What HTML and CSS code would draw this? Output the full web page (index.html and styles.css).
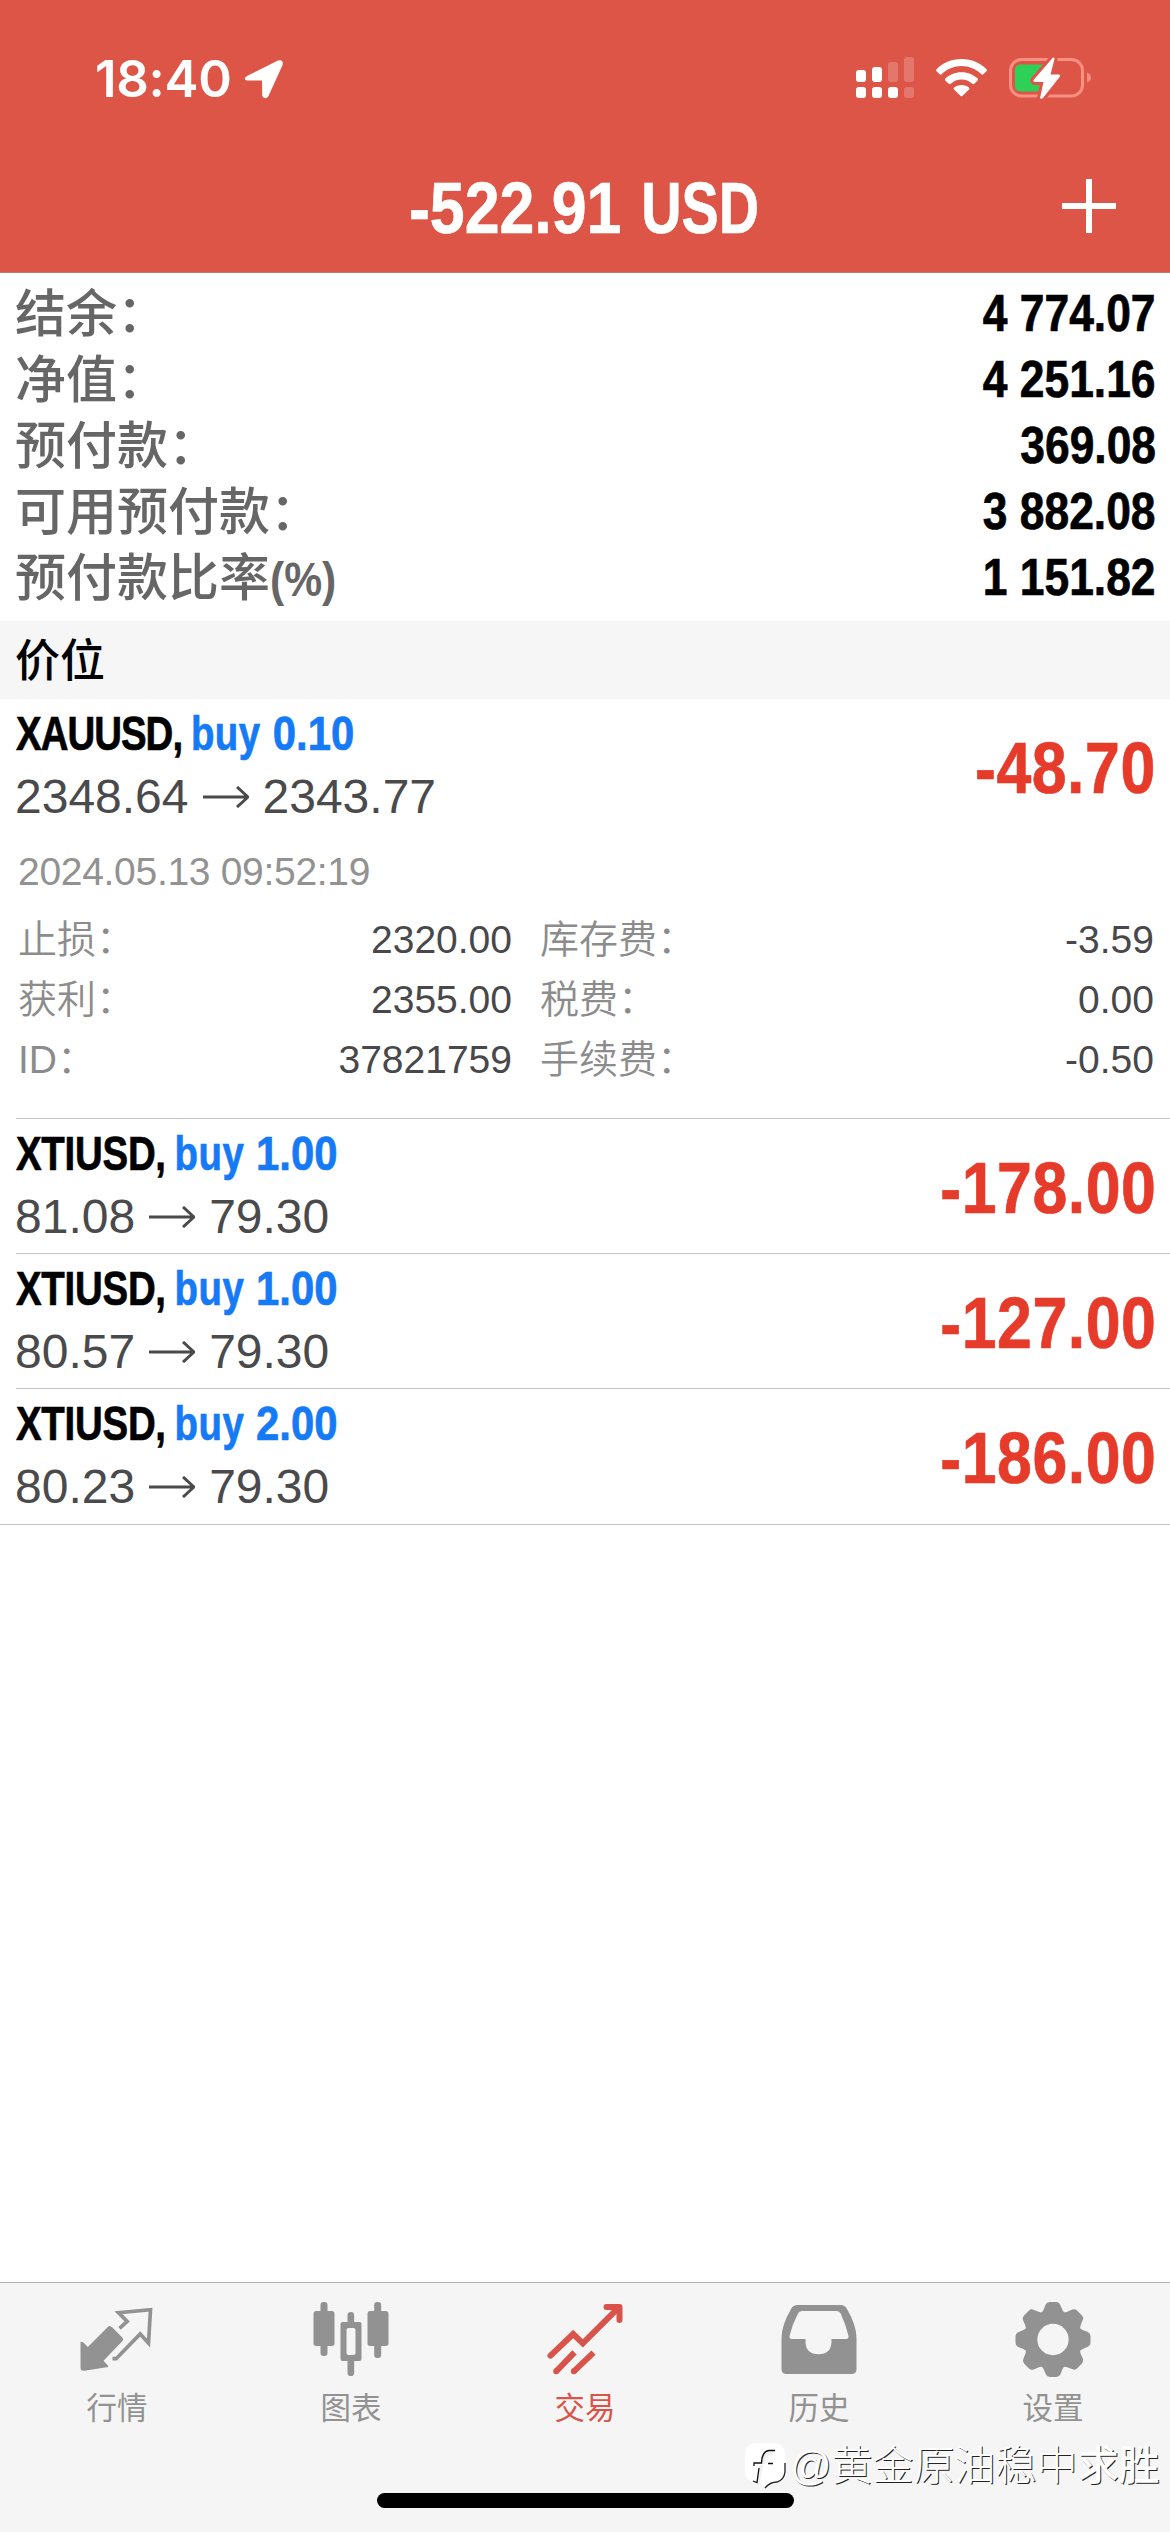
FILE: index.html
```html
<!DOCTYPE html>
<html lang="zh-CN">
<head>
<meta charset="utf-8">
<title>交易</title>
<link rel="stylesheet" href="styles.css">
</head>
<body>
<div class="app">
  <header class="header">
    <div class="status">
      <div class="status-left">
        <span class="time">18:40</span>
        <svg class="locate" width="40" height="40" viewBox="0 0 40 40"><path d="M3 17 L34 1.6 Q39.500 0 38.600 6 L24.500 37 Q21.500 41.500 18.200 37 L18 21.500 L3 21.500 Q-1.500 20 3 17Z" fill="#fff"/></svg>
      </div>
      <div class="status-right">
        <svg width="58" height="41" viewBox="0 0 58 41" fill="#fff">
          <rect x="0" y="13" width="10" height="12" rx="3"/><rect x="16" y="10" width="10" height="15" rx="3"/>
          <rect x="32" y="5" width="10" height="20" rx="3" opacity=".2"/><rect x="48" y="0" width="10" height="25" rx="3" opacity=".2"/>
          <rect x="0" y="30" width="10" height="11" rx="3"/><rect x="16" y="30" width="10" height="11" rx="3"/><rect x="32" y="30" width="10" height="11" rx="3"/>
          <rect x="48" y="30" width="10" height="11" rx="3" opacity=".2"/>
        </svg>
        <svg class="wifi" width="51" height="38" viewBox="0 0 51 38" fill="#fff">
          <path d="M25.500 0 C35.500 0 44.500 4 50.500 10.300 Q51.300 11.300 50.500 12.200 L47.300 15.300 Q46.300 16.100 45.300 15.200 C40 10 33 7 25.500 7 C18 7 11 10 5.700 15.200 Q4.700 16.100 3.700 15.300 L.5 12.200 Q-.3 11.300 .5 10.300 C6.500 4 15.500 0 25.500 0Z"/>
          <path d="M25.500 13.200 C32 13.200 37.700 15.700 41.700 19.500 Q42.500 20.500 41.700 21.400 L38.300 24.800 Q37.300 25.500 36.300 24.700 C33.300 22 29.600 20.500 25.500 20.500 C21.400 20.500 17.700 22 14.700 24.700 Q13.700 25.500 12.700 24.800 L9.300 21.400 Q8.500 20.500 9.300 19.500 C13.300 15.700 19 13.200 25.500 13.200Z"/>
          <path d="M25.500 26 C28.500 26 31 27 33 28.500 Q33.800 29.500 33 30.400 L26.600 36.800 Q25.500 37.800 24.400 36.800 L18 30.400 Q17.200 29.500 18 28.500 C20 27 22.500 26 25.500 26Z"/>
        </svg>
        <svg width="83" height="42" viewBox="0 0 83 42">
          <rect x="1.500" y="2.500" width="72" height="36.500" rx="11" fill="none" stroke="#fa9082" stroke-width="3"/>
          <path d="M78 15.500 Q82 17 82 20.500 Q82 24 78 25.500Z" fill="#f58d80"/>
          <path d="M12 7.500 H36 V34.500 H12 Q6 34.500 6 28.500 V13.500 Q6 7.500 12 7.500Z" fill="#2ed158"/>
          <path d="M44 .5 L24.500 23 Q24 25 26 25 L34.500 25 L31 41 Q32 42.500 34 41 L51 19.500 Q51.500 17.500 49.500 17.500 L41.500 17.500 L45.500 2 Q45.500 0 44 .5Z" fill="#fff" stroke="#dd5547" stroke-width="6" paint-order="stroke"/>
        </svg>
      </div>
    </div>
    <div class="nav">
      <h1 class="cond balance"><span class="amount">-522.91</span><span class="currency">USD</span></h1>
      <svg class="plus" width="54" height="54" viewBox="0 0 54 54"><path d="M27 0V54M0 27H54" stroke="#fff" stroke-width="6"/></svg>
    </div>
  </header>

  <section class="summary">
    <div class="sum-row"><span class="sum-label">结余：</span><span class="cond sum-value">4 774.07</span></div>
    <div class="sum-row"><span class="sum-label">净值：</span><span class="cond sum-value">4 251.16</span></div>
    <div class="sum-row"><span class="sum-label">预付款：</span><span class="cond sum-value">369.08</span></div>
    <div class="sum-row"><span class="sum-label">可用预付款：</span><span class="cond sum-value">3 882.08</span></div>
    <div class="sum-row"><span class="sum-label">预付款比率<span class="cond pct">(%)</span></span><span class="cond sum-value">1 151.82</span></div>
  </section>

  <h2 class="section-title">价位</h2>

  <main class="positions">
    <article class="position">
      <div class="main-row">
        <div>
          <div class="title cond"><span class="symbol symbol-wide">XAUUSD,</span><span class="side">buy</span><span class="volume">0.10</span></div>
          <div class="price"><span>2348.64</span><svg class="arrow" width="46" height="22" viewBox="0 0 46 22"><path d="M0 11H45M34 1L45 11L34 21" fill="none" stroke="#4a4a4c" stroke-width="3"/></svg><span>2343.77</span></div>
        </div>
        <div class="cond profit">-48.70</div>
      </div>
      <div class="details">
        <div class="date">2024.05.13 09:52:19</div>
        <dl class="grid">
          <dt>止损：</dt><dd>2320.00</dd><dt>库存费：</dt><dd>-3.59</dd>
          <dt>获利：</dt><dd>2355.00</dd><dt>税费：</dt><dd>0.00</dd>
          <dt>ID：</dt><dd>37821759</dd><dt>手续费：</dt><dd>-0.50</dd>
        </dl>
      </div>
    </article>
    <article class="position">
      <div class="main-row">
        <div>
          <div class="title cond"><span class="symbol">XTIUSD,</span><span class="side">buy</span><span class="volume">1.00</span></div>
          <div class="price"><span>81.08</span><svg class="arrow" width="46" height="22" viewBox="0 0 46 22"><path d="M0 11H45M34 1L45 11L34 21" fill="none" stroke="#4a4a4c" stroke-width="3"/></svg><span>79.30</span></div>
        </div>
        <div class="cond profit">-178.00</div>
      </div>
    </article>
    <article class="position">
      <div class="main-row">
        <div>
          <div class="title cond"><span class="symbol">XTIUSD,</span><span class="side">buy</span><span class="volume">1.00</span></div>
          <div class="price"><span>80.57</span><svg class="arrow" width="46" height="22" viewBox="0 0 46 22"><path d="M0 11H45M34 1L45 11L34 21" fill="none" stroke="#4a4a4c" stroke-width="3"/></svg><span>79.30</span></div>
        </div>
        <div class="cond profit">-127.00</div>
      </div>
    </article>
    <article class="position">
      <div class="main-row">
        <div>
          <div class="title cond"><span class="symbol">XTIUSD,</span><span class="side">buy</span><span class="volume">2.00</span></div>
          <div class="price"><span>80.23</span><svg class="arrow" width="46" height="22" viewBox="0 0 46 22"><path d="M0 11H45M34 1L45 11L34 21" fill="none" stroke="#4a4a4c" stroke-width="3"/></svg><span>79.30</span></div>
        </div>
        <div class="cond profit">-186.00</div>
      </div>
    </article>
  </main>

  <nav class="tabs">
    <a class="tab">
      <svg class="tab-icon" viewBox="238.500 96 225 225">
        <path d="M325 168 Q330 168 335 172 L366 203 Q370 208 366 213 L309 272 L323 287 V291 L252 302 Q240 303 240 293 V215 L248 217 L262 231Z" fill="currentColor"/>
        <path d="M357 175 L380 154 L354 128 L450 119 L444 219 L419 192 L347 266 H336" fill="none" stroke="currentColor" stroke-width="11"/>
      </svg>
      <span>行情</span>
    </a>
    <a class="tab">
      <svg class="tab-icon" viewBox="940.500 96 225 225" fill="currentColor">
        <rect x="960" y="96" width="21" height="162" rx="9"/><rect x="939" y="123" width="63" height="105" rx="8"/>
        <rect x="1121" y="96" width="21" height="168" rx="9"/><rect x="1101" y="123" width="63" height="105" rx="8"/>
        <path d="M1041 160V136q0-10 10-10t10 10v24zM1041 270v38q0 10 10 10t10-10v-38z"/>
        <path fill-rule="evenodd" d="M1026 156h51q6 0 6 6v104q0 7-6 7h-51q-6 0-6-7V162q0-6 6-6zM1044 174q-6 0-6 6v69q0 6 6 6h15q6 0 6-6v-69q0-6-6-6z"/>
      </svg>
      <span>图表</span>
    </a>
    <a class="tab active">
      <svg class="tab-icon" viewBox="442.500 96 225 225" fill="none" stroke="currentColor" stroke-width="18">
        <path d="M450 257L518 192L547 220L655 112" stroke-linecap="round"/>
        <path d="M618 111H657V150" stroke-linecap="round" stroke-linejoin="round"/>
        <path d="M640 111H657V128Z" fill="currentColor" stroke="none"/>
        <path d="M467 304L522 247M520 304L579 248"/>
        <path d="M467 304h.1M520 304h.1" stroke-linecap="round"/>
      </svg>
      <span>交易</span>
    </a>
    <a class="tab">
      <svg class="tab-icon" viewBox="124.500 96 225 225" fill="currentColor">
        <path fill-rule="evenodd" d="M171 105H300Q313 105 319 116Q348 166 348 203V297Q348 312 333 312H138Q123 312 123 297V203Q123 166 152 116Q158 105 171 105ZM184 123Q176 123 172 131Q155 164 147 198Q146 207 154 207H195V217Q197 253 234 253Q271 253 273 217V207H317Q325 207 324 198Q316 164 301 131Q297 123 289 123Z"/>
      </svg>
      <span>历史</span>
    </a>
    <a class="tab">
      <svg class="tab-icon" viewBox="826.500 96 225 225" fill="currentColor">
        <defs><path id="tooth" d="M900 134Q910 121 915 104Q919 96 927 96H948Q956 96 959 104Q965 121 975 134Z"/></defs>
        <circle cx="937.500" cy="208.500" r="67.500" fill="none" stroke="currentColor" stroke-width="41"/>
        <use href="#tooth"/><use href="#tooth" transform="rotate(45 937.500 208.500)"/><use href="#tooth" transform="rotate(90 937.500 208.500)"/><use href="#tooth" transform="rotate(135 937.500 208.500)"/><use href="#tooth" transform="rotate(180 937.500 208.500)"/><use href="#tooth" transform="rotate(225 937.500 208.500)"/><use href="#tooth" transform="rotate(270 937.500 208.500)"/><use href="#tooth" transform="rotate(315 937.500 208.500)"/>
      </svg>
      <span>设置</span>
    </a>
  </nav>

  <div class="home-bar"></div>
  <div class="watermark">
    <svg width="41" height="46" viewBox="0 0 41 46">
      <path d="M12 0H28Q40 0 40 12V28Q40 37 32 39Q26 40 20 45L16 40H12Q0 38 0 28V12Q0 0 12 0Z" fill="#fff"/>
      <path d="M40 20V29Q39 37 32 39Q25 39 20 45" fill="none" stroke="#222" stroke-width="1.300"/>
      <path d="M28 10Q19 10 18 21M13 40L16 22" fill="none" stroke="#f1f1f1" stroke-width="4"/>
      <path d="M30 7.500H24Q17 8 16.500 20H9V23M23 20.500H28M14 25L12 39.500L8 38" fill="none" stroke="#111" stroke-width="1.300"/>
    </svg>
    <span>@黄金原油稳中<b>求胜</b></span>
  </div>
</div>
</body>
</html>
```
FILE: styles.css
```css
* { box-sizing: border-box; }
body, h1, h2, dl, dd { margin: 0; }
body {
  width: 1170px;
  background: #fff;
  color: #000;
  font-family: "Liberation Sans", "Noto Sans CJK SC", sans-serif;
}
.app {
  position: relative;
  display: flex;
  flex-direction: column;
  width: 1170px;
  height: 2532px;
}

/* Condensed bold: the regular bold face, narrowed */
.cond {
  font-weight: 700;
  white-space: nowrap;
  transform: scaleX(.87);
  transform-origin: left;
  -webkit-text-stroke: .7px currentColor;
}

/* Header */
.header {
  height: 273px;
  background: #dd5547;
  border-bottom: 1px solid #b9796f;
  color: #fff;
}
.status {
  display: flex;
  justify-content: space-between;
  height: 140px;
  padding: 46px 78px 0 95px;
}
.status-left { display: flex; gap: 12px; }
.time {
  width: 137px;
  font: 600 51px/66px Inter, sans-serif;
  letter-spacing: -.3px;
  white-space: nowrap;
}
.locate { margin-top: 13px; }
.status-right { display: flex; gap: 22px; padding-top: 11px; }
.wifi { margin-top: 2px; }
.nav {
  display: grid;
  grid-template-columns: 409px 1fr 108px;
  align-items: center;
  height: 132px;
}
.balance {
  grid-column: 2;
  display: flex;
  gap: 23px;
  padding-top: 3px;
  font-size: 72px;
  line-height: 90px;
}
.currency {
  transform: scaleX(.89);
  transform-origin: left;
}
.plus { display: block; }

/* Account summary */
.summary {
  height: 348px;
  padding: 8px 14px 10px 15px;
}
.sum-row {
  display: flex;
  justify-content: space-between;
  height: 66px;
  line-height: 66px;
}
.sum-label {
  padding-top: 1px;
  color: #666;
  font-size: 51px;
  font-weight: 500;
  white-space: nowrap;
}
.pct {
  display: inline-block;
  font-size: 49px;
  line-height: 60px;
  -webkit-text-stroke: 0;
}
.sum-value { font-size: 51px; transform-origin: right; }

.section-title {
  height: 78px;
  padding-left: 15px;
  background: #f6f6f6;
  font-size: 45px;
  font-weight: 500;
  line-height: 81px;
}

/* Open positions */
.positions { border-bottom: 1px solid #c4c4c4; }
.position + .position .main-row {
  border-top: 1px solid #c4c4c4;
  height: 135px;
}
.position:last-child .main-row { height: 136px; }
.main-row {
  display: flex;
  justify-content: space-between;
  height: 134px;
  margin-left: 16px;
  padding: 5px 14px 0 0;
}
.title {
  display: flex;
  height: 60px;
  font-size: 48px;
  line-height: 60px;
  transform: scaleX(.8);
}
.symbol { letter-spacing: -.3px; margin-right: 11px; }
.symbol-wide { letter-spacing: -1.2px; }
.side { color: #157af6; letter-spacing: .6px; margin-right: 15px; }
.volume {
  color: #157af6;
  transform: scaleX(1.09);
  transform-origin: left;
}
.price {
  display: flex;
  align-items: center;
  height: 66px;
  margin-left: -1px;
  color: #4a4a4c;
  font-size: 48px;
  line-height: 66px;
}
.arrow { margin: 0 14px; }
.profit {
  color: #e63b2a;
  font-size: 72px;
  line-height: 128px;
  letter-spacing: .6px;
  transform-origin: right;
}
.details { height: 285px; padding: 9px 16px 0 18px; }
.date {
  color: #929292;
  font-size: 39px;
  line-height: 60px;
  letter-spacing: -.3px;
}
.grid {
  display: grid;
  grid-template-columns: 150px 344px 200px 1fr;
  grid-auto-rows: 60px;
  margin-top: 8px;
  font-size: 39px;
  line-height: 60px;
}
dt {
  color: #8c8c8c;
  font-weight: 350;
  white-space: nowrap;
}
dd { text-align: right; color: #48484a; }
dt:nth-of-type(even) { padding-left: 28px; }

/* Tab bar */
.tabs {
  display: flex;
  height: 250px;
  margin-top: auto;
  border-top: 1px solid #b2b2b2;
  background: #f5f5f5;
}
.tab {
  flex: 1;
  display: flex;
  flex-direction: column;
  align-items: center;
  gap: 9px;
  padding-top: 19px;
  color: #929292;
  font-size: 30.500px;
  line-height: 44px;
}
.tab.active { color: #d9534a; }
.tab-icon { display: block; width: 75px; height: 75px; overflow: visible; }

.home-bar {
  position: absolute;
  left: 377px;
  top: 2493px;
  width: 417px;
  height: 15px;
  border-radius: 8px;
  background: #000;
}
.watermark {
  position: absolute;
  left: 745px;
  top: 2436px;
  display: flex;
  align-items: center;
  gap: 4px;
  color: #fff;
  font-weight: 300;
  font-size: 41px;
  line-height: 60px;
  text-shadow: 1px 1px 0 #222;
  white-space: nowrap;
}
.watermark b { font-weight: 500; }
```
